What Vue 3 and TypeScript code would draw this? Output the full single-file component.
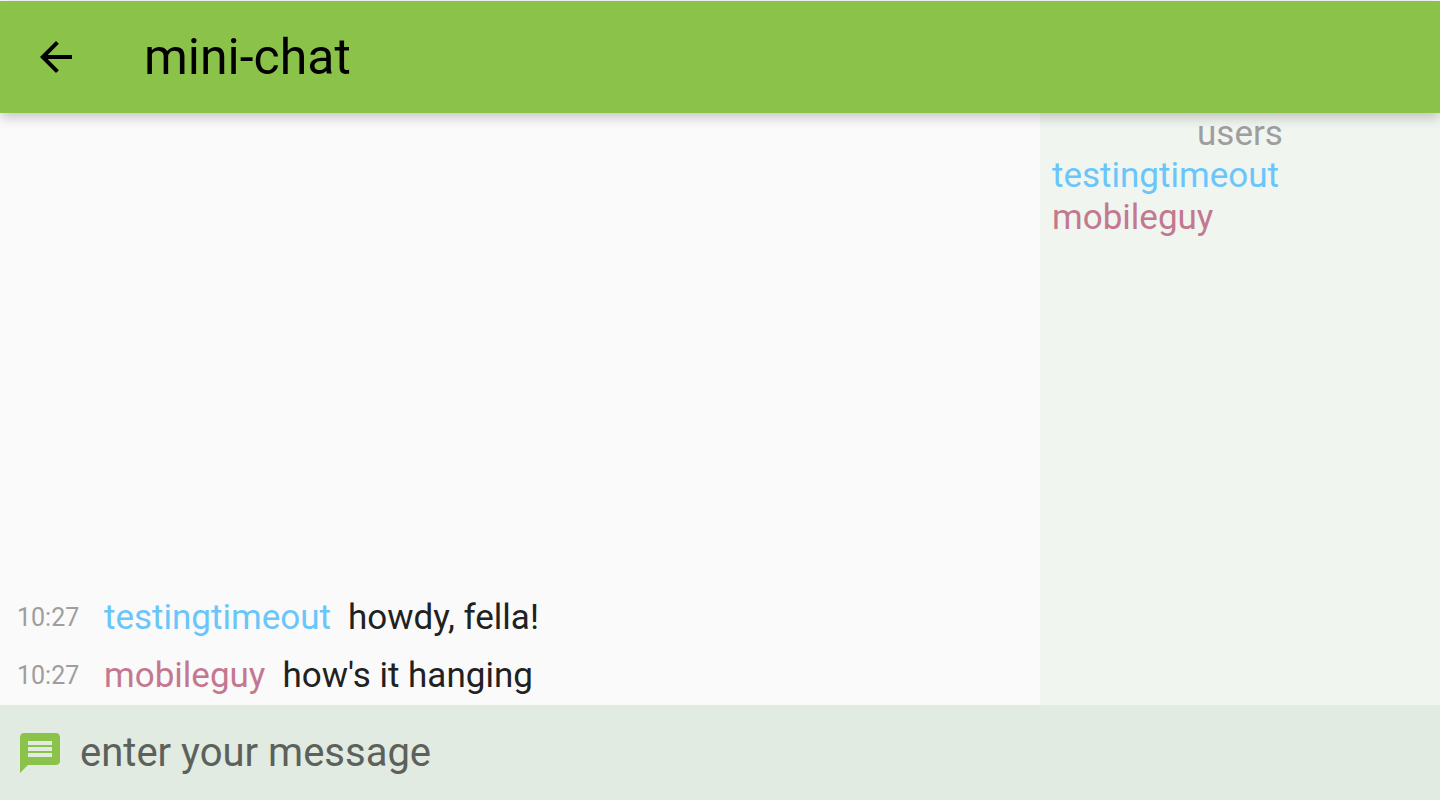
<script setup lang="ts">
import { ref } from 'vue'

interface User {
  name: string
  tone: 'sky' | 'rose'
}

interface Message {
  time: string
  user: User
  text: string
}

const users: User[] = [
  { name: 'testingtimeout', tone: 'sky' },
  { name: 'mobileguy', tone: 'rose' },
]

const messages = ref<Message[]>([
  { time: '10:27', user: users[0], text: 'howdy, fella!' },
  { time: '10:27', user: users[1], text: "how's it hanging" },
])

const draft = ref('')

function send() {
  const text = draft.value.trim()
  if (!text) return
  const time = new Date().toTimeString().slice(0, 5)
  messages.value.push({ time, user: users[1], text })
  draft.value = ''
}
</script>

<template>
  <div class="app">
    <header class="bar">
      <button class="back" type="button" aria-label="Back">
        <svg viewBox="0 0 24 24" width="48" height="48" aria-hidden="true">
          <path d="M20 11H7.83l5.59-5.59L12 4l-8 8 8 8 1.41-1.41L7.83 13H20v-2z" />
        </svg>
      </button>
      <h1 class="title">mini-chat</h1>
    </header>

    <div class="body">
      <main class="log">
        <div v-for="(m, i) in messages" :key="i" class="message">
          <time class="time">{{ m.time }}</time>
          <span class="author" :class="m.user.tone">{{ m.user.name }}</span>
          <span class="text">{{ m.text }}</span>
        </div>
      </main>
      <aside class="users">
        <h2 class="heading">users</h2>
        <ul class="list">
          <li v-for="u in users" :key="u.name" :class="u.tone">{{ u.name }}</li>
        </ul>
      </aside>
    </div>

    <form class="composer" @submit.prevent="send">
      <label class="label" for="message" aria-label="Message">
        <svg viewBox="0 0 24 24" width="48" height="48" aria-hidden="true">
          <path d="M20 2H4c-1.1 0-1.99.9-1.99 2L2 22l4-4h14c1.1 0 2-.9 2-2V4c0-1.1-.9-2-2-2zM6 6h12v2H6V6zm12 5H6V9h12v2zm0 3H6v-2h12v2z" />
        </svg>
      </label>
      <input id="message" v-model="draft" class="input" type="text" placeholder="enter your message" autocomplete="off" />
    </form>
  </div>
</template>

<style>
body {
  margin: 0;
}
</style>

<style scoped>
.app {
  display: flex;
  flex-direction: column;
  height: 100vh;
  box-sizing: border-box;
  border-top: 1px solid #fafafa;
  background: #fafafa;
  color: #212121;
  font-family: Roboto, "Liberation Sans", sans-serif;
  font-size: 35px;
  line-height: 42px;
}

.bar {
  position: relative;
  z-index: 1;
  display: flex;
  align-items: center;
  gap: 64px;
  height: 112px;
  padding: 0 32px;
  background: #8bc34a;
  box-shadow: 0 4px 12px rgba(0, 0, 0, 0.22);
  color: #000;
}

.back {
  display: flex;
  padding: 0;
  border: 0;
  background: none;
  cursor: pointer;
}

.title {
  margin: 0;
  font-size: 50px;
  font-weight: 400;
  line-height: 58px;
}

.body {
  display: flex;
  flex: 1;
  min-height: 0;
}

.log {
  display: flex;
  flex: 1;
  flex-direction: column;
  justify-content: flex-end;
  gap: 16px;
  padding: 0 17px 8px;
}

.message {
  display: flex;
  align-items: center;
}

.time {
  width: 87px;
  color: #9e9e9e;
  font-size: 25px;
}

.text {
  margin-left: 17px;
}

.sky {
  color: #6ac6fa;
}

.rose {
  color: #c47890;
}

.users {
  box-sizing: border-box;
  width: 400px;
  padding: 0 12px;
  background: #f0f5ef;
}

.heading {
  margin: 0;
  color: #9e9e9e;
  font-size: inherit;
  font-weight: 400;
  text-align: center;
}

.list {
  margin: 0;
  padding: 0;
  list-style: none;
}

.composer {
  display: flex;
  align-items: center;
  gap: 16px;
  height: 95px;
  padding: 0 16px;
  background: #e1ebe1;
}

.label {
  display: flex;
  fill: #8bc34a;
}

.input {
  flex: 1;
  min-width: 0;
  padding: 0;
  border: 0;
  outline: 0;
  background: none;
  color: #212121;
  font: inherit;
  font-size: 40px;
  line-height: 47px;
}

.input::placeholder {
  color: #5c615c;
  opacity: 1;
}
</style>
